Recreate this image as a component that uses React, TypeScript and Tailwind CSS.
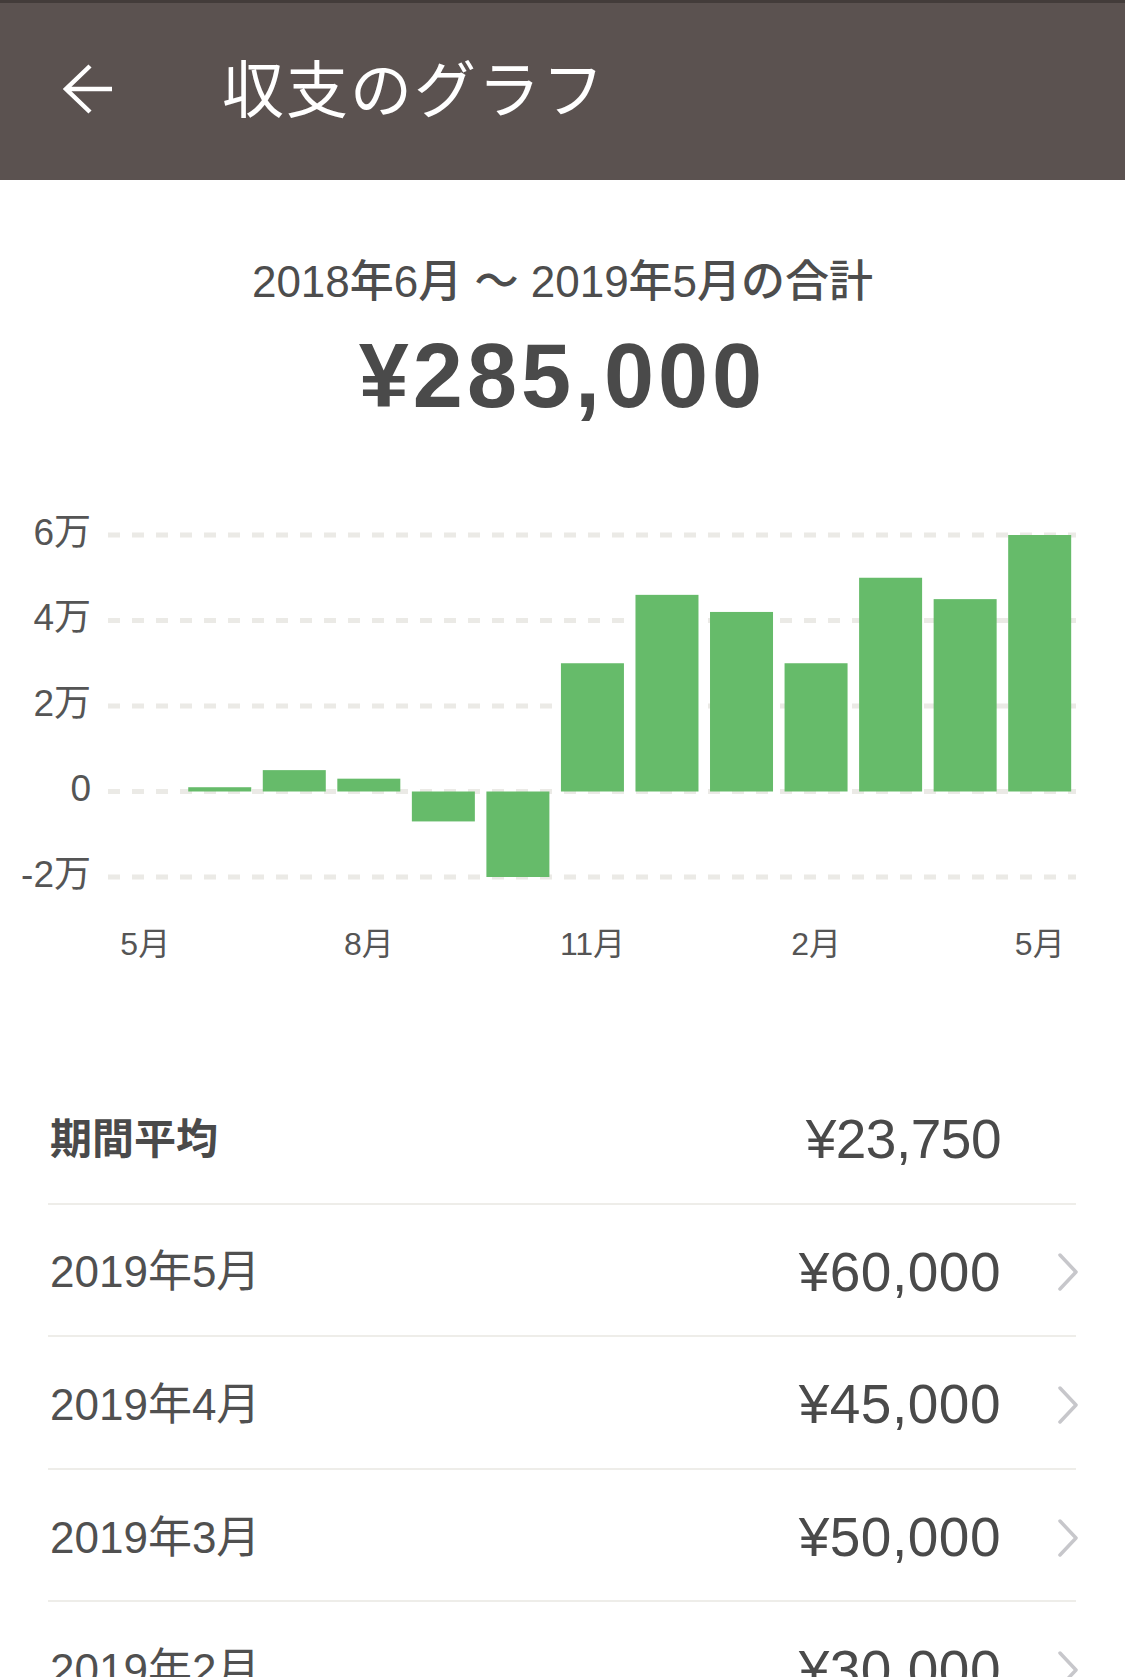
import React from "react";

const values = [1000, 5000, 3000, -7000, -20000, 30000, 46000, 42000, 30000, 50000, 45000, 60000];

const rows = [
  { label: "2019年5月", value: "¥60,000" },
  { label: "2019年4月", value: "¥45,000" },
  { label: "2019年3月", value: "¥50,000" },
  { label: "2019年2月", value: "¥30,000" },
];

const grid = [
  { v: 60000, label: "6万" },
  { v: 40000, label: "4万" },
  { v: 20000, label: "2万" },
  { v: 0, label: "0" },
  { v: -20000, label: "-2万" },
];

const xLabels = [
  { i: 0, label: "5月" },
  { i: 3, label: "8月" },
  { i: 6, label: "11月" },
  { i: 9, label: "2月" },
  { i: 12, label: "5月" },
];

function Chart() {
  const zeroY = 311.5;
  const per = 85.5 / 20000;
  const x0 = 108;
  const slot = 74.54;
  return (
    <svg width={1125} height={500} viewBox="0 0 1125 500" className="block">
      {grid.map((g) => {
        const y = zeroY - g.v * per;
        return (
          <g key={g.label}>
            <line x1={108} x2={1076} y1={y} y2={y} stroke="#ebeae6" strokeWidth={5} strokeDasharray="12 12" />
            <text x={91} y={y - 3} textAnchor="end" dominantBaseline="central" fontSize={37} fill="#555555">
              {g.label}
            </text>
          </g>
        );
      })}
      {values.map((v, idx) => {
        const m = idx + 1;
        const x = x0 + slot * m + 5.7;
        const h = Math.abs(v) * per;
        const y = v >= 0 ? zeroY - h : zeroY;
        return <rect key={idx} x={x} y={y} width={63} height={h} fill="#66bb6a" />;
      })}
      {xLabels.map((l) => (
        <text
          key={l.i}
          x={x0 + slot * (l.i + 0.5)}
          y={464}
          textAnchor="middle"
          dominantBaseline="central"
          fontSize={32}
          fill="#555555"
        >
          {l.label}
        </text>
      ))}
    </svg>
  );
}

function Chevron() {
  return (
    <svg width={22} height={38} viewBox="0 0 22 38" className="-mr-[3px]">
      <path d="M3 2 L19 19 L3 36" fill="none" stroke="#c7c7cb" strokeWidth={3.5} strokeLinecap="round" strokeLinejoin="round" />
    </svg>
  );
}

function Row({ label, value, bold, chevron }: { label: string; value: string; bold?: boolean; chevron?: boolean }) {
  return (
    <div>
      <div className="flex h-[130.6px] items-center pl-[2px] pt-[5px]">
        <span
          className={
            bold
              ? "text-[42px] font-bold leading-none text-[#4a4a4a]"
              : "text-[44px] font-normal leading-none text-[#505050]"
          }
        >
          {label}
        </span>
        <span
          className={
            bold
              ? "ml-auto text-[55px] leading-none tracking-[-0.5px] text-[#4a4a4a]"
              : "ml-auto text-[55px] leading-none tracking-[0.5px] text-[#4a4a4a]"
          }
        >
          {value}
        </span>
        <div className="flex w-[75px] justify-end">{chevron ? <Chevron /> : null}</div>
      </div>
      <div className="h-[2px] bg-[#eeede9]" />
    </div>
  );
}

export default function App() {
  return (
    <div className="h-[1677px] w-[1125px] overflow-hidden bg-white font-['Liberation_Sans','Noto_Sans_CJK_JP',sans-serif]">
      <header className="flex h-[180px] items-center border-t-[3px] border-[#433c3a] bg-[#5b5250] pb-[6px] pl-[62px]">
        <svg width={52} height={52} viewBox="0 0 52 52">
          <path d="M50 26 H4 M28 3 L4 26 L28 49" fill="none" stroke="#ffffff" strokeWidth={4.5} strokeLinejoin="miter" />
        </svg>
        <h1 className="mb-[6px] ml-[108px] font-['Noto_Sans_CJK_JP',sans-serif] text-[62px] font-normal leading-none tracking-[2px] text-white">
          収支のグラフ
        </h1>
      </header>

      <section className="flex flex-col items-center pt-[72px]">
        <div className="h-[60px] text-[44px] font-medium leading-[60px] text-[#4d4d4d]">2018年6月 〜 2019年5月の合計</div>
        <div className="mt-[14px] h-[100px] text-[90px] font-bold leading-[100px] tracking-[4px] text-[#4a4a4a]">
          ¥285,000
        </div>
      </section>

      <div className="mt-[54px]">
        <Chart />
      </div>

      <div className="ml-[48px] mt-[92px] w-[1028px]">
        <Row label="期間平均" value="¥23,750" bold />
        {rows.map((r) => (
          <Row key={r.label} label={r.label} value={r.value} chevron />
        ))}
      </div>
    </div>
  );
}
